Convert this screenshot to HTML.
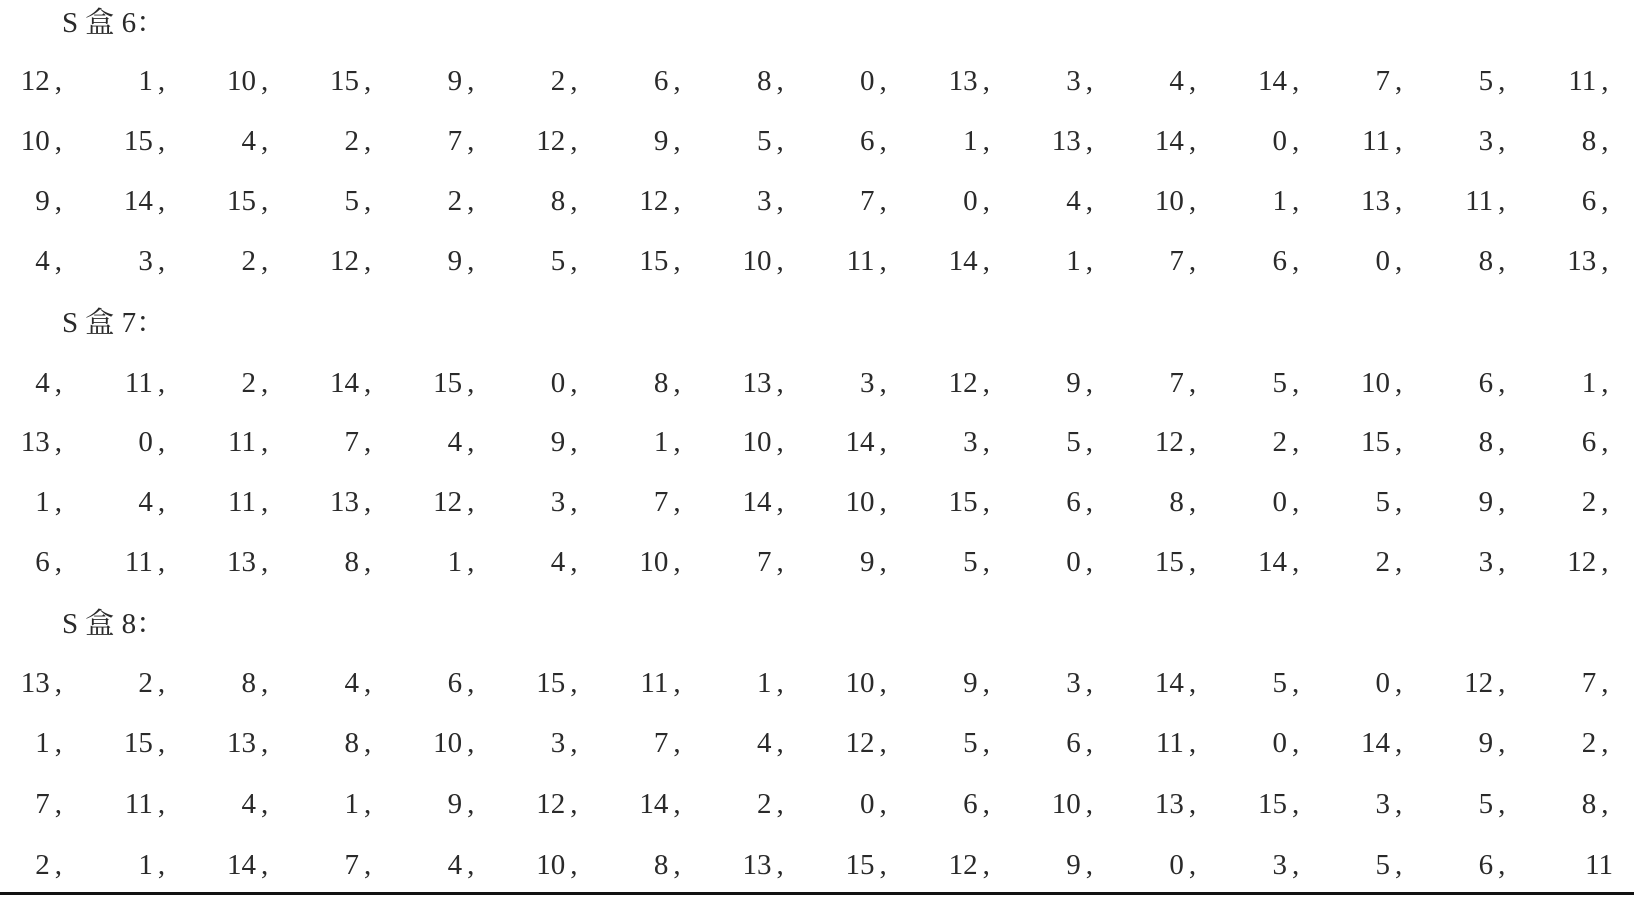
<!DOCTYPE html>
<html><head><meta charset="utf-8"><style>
html,body{margin:0;padding:0;background:#fff;width:1644px;height:908px;overflow:hidden;position:relative}
.c{position:absolute;font-family:"Liberation Serif","Noto Serif CJK SC",serif;font-size:29px;color:#2a2a2a;line-height:40px;height:40px;white-space:nowrap}
.n{text-align:right;width:90px}
.n span{margin-left:5px}
.h{left:62px}
.line{position:absolute;left:0;top:892px;width:1634px;height:3px;background:#111}
</style></head><body>
<div id="r"></div>
<div class="line"></div>
<script>
var rows=[
["h","S 盒 6："],
[12,1,10,15,9,2,6,8,0,13,3,4,14,7,5,11],
[10,15,4,2,7,12,9,5,6,1,13,14,0,11,3,8],
[9,14,15,5,2,8,12,3,7,0,4,10,1,13,11,6],
[4,3,2,12,9,5,15,10,11,14,1,7,6,0,8,13],
["h","S 盒 7："],
[4,11,2,14,15,0,8,13,3,12,9,7,5,10,6,1],
[13,0,11,7,4,9,1,10,14,3,5,12,2,15,8,6],
[1,4,11,13,12,3,7,14,10,15,6,8,0,5,9,2],
[6,11,13,8,1,4,10,7,9,5,0,15,14,2,3,12],
["h","S 盒 8："],
[13,2,8,4,6,15,11,1,10,9,3,14,5,0,12,7],
[1,15,13,8,10,3,7,4,12,5,6,11,0,14,9,2],
[7,11,4,1,9,12,14,2,0,6,10,13,15,3,5,8],
[2,1,14,7,4,10,8,13,15,12,9,0,3,5,6,11]];
var ys=[23,81,141,201,261,323,383,442,502,562,624,683,743,804,865];
var h="";
rows.forEach(function(r,i){
 var top=ys[i]-20;
 if(r[0]==="h"){h+='<div class="c h" style="top:'+top+'px">'+r[1]+'</div>';return;}
 r.forEach(function(v,j){
  var last=(i===14&&j===15);
  var right=last?1613:62+103.1*j;
  h+='<div class="c n" style="top:'+top+'px;left:'+(right-90).toFixed(1)+'px">'+v+(last?'':'<span>,</span>')+'</div>';
 });
});
document.getElementById("r").innerHTML=h;
</script>
</body></html>
